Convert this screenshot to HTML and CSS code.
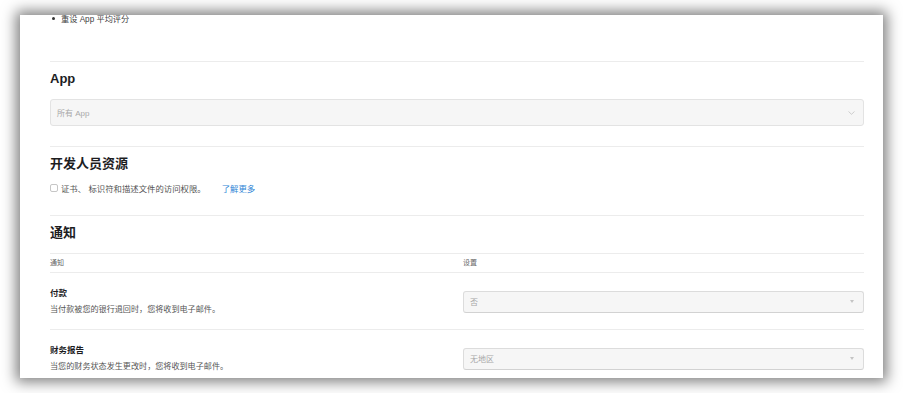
FILE: index.html
```html
<!DOCTYPE html>
<html lang="zh-CN">
<head>
  <meta charset="UTF-8" />
  <meta name="viewport" content="width=device-width, initial-scale=1.0"/>
  <title>用户访问权限</title>
  <link rel="stylesheet" href="styles.css">
</head>
<body>
  <div class="page">
    <div class="panel">
      <ul class="perm-list">
        <li>重设 App 平均评分</li>
      </ul>

      <div class="section">
        <h2>App</h2>
        <div class="select select-app">
          <span>所有 App</span>
          <svg class="chevron" width="7" height="4" viewBox="0 0 7 4"><path d="M0.5 0.5 L3.5 3.3 L6.5 0.5" fill="none" stroke="#c8c8c8" stroke-width="0.9"/></svg>
        </div>
      </div>

      <div class="section">
        <h2>开发人员资源</h2>
        <div class="check-row">
          <span class="checkbox"></span>
          <span class="check-text">证书、 标识符和描述文件的访问权限。</span>
          <a class="link" href="#">了解更多</a>
        </div>
      </div>

      <div class="section section-notify">
        <h2>通知</h2>
      </div>

      <div class="table-head">
        <span>通知</span>
        <span>设置</span>
      </div>

      <div class="row">
        <div class="row-info">
          <div class="row-title">付款</div>
          <div class="row-desc">当付款被您的银行退回时，您将收到电子邮件。</div>
        </div>
        <div class="select select-small">
          <span>否</span>
          <span class="caret"></span>
        </div>
      </div>

      <div class="row">
        <div class="row-info">
          <div class="row-title">财务报告</div>
          <div class="row-desc">当您的财务状态发生更改时，您将收到电子邮件。</div>
        </div>
        <div class="select select-small">
          <span>无地区</span>
          <span class="caret"></span>
        </div>
      </div>
    </div>
  </div>
</body>
</html>
```

FILE: styles.css
```css
body {
  margin: 0;
  background: #fff;
  font-family: "Liberation Sans", "Noto Sans CJK SC", sans-serif;
  color: #222;
}
.page {
  padding: 15px 20px;
}
.panel {
  width: 814px;
  height: 363px;
  padding: 0 19px 0 30px;
  background: #fff;
  overflow: hidden;
  box-shadow: 0 0 13px 4px rgba(0,0,0,0.5);
}
.perm-list {
  list-style: none;
  margin: -2px 0 35px 0;
  padding: 0;
  height: 13px;
  font-size: 8.2px;
  line-height: 13px;
  color: #444;
}
.perm-list li::before {
  content: "";
  display: inline-block;
  width: 3px;
  height: 3px;
  border-radius: 50%;
  background: #333;
  margin: 0 6px 0 2px;
  vertical-align: 2px;
}
.section {
  border-top: 1px solid #ececec;
  padding-top: 9px;
  padding-bottom: 20px;
}
.section h2 {
  margin: 0;
  font-size: 13px;
  line-height: 16px;
  font-weight: bold;
  color: #1d1d1f;
}
.section-notify {
  padding-bottom: 12px;
}
.select {
  display: flex;
  align-items: center;
  justify-content: space-between;
  box-sizing: border-box;
  background: #f6f6f6;
  border: 1px solid #e3e3e3;
  border-radius: 3px;
  padding: 0 8px 0 6px;
  font-size: 8px;
  color: #a8a8a8;
}
.select-app {
  margin-top: 12px;
  height: 27px;
}
.select-app .chevron {
  margin-top: 1px;
}
.select-small {
  height: 22px;
  width: 401px;
  border-color: #dcdcdc;
  border-bottom-color: #d2d2d2;
}
.caret {
  width: 0;
  height: 0;
  border-left: 2.5px solid transparent;
  border-right: 2.5px solid transparent;
  border-top: 3px solid #c4c4c4;
  margin-right: 1px;
}
.check-row {
  display: flex;
  align-items: center;
  margin-top: 9px;
  height: 14px;
  font-size: 8.4px;
  color: #555;
}
.checkbox {
  width: 6px;
  height: 6px;
  border: 1px solid #c6c6c6;
  border-radius: 2px;
  margin-right: 3px;
}
.link {
  margin-left: 16px;
  color: #2f86d6;
  text-decoration: none;
}
.table-head {
  display: grid;
  grid-template-columns: 413px 401px;
  border-top: 1px solid #ececec;
  padding: 4px 0 4px 0;
  font-size: 7px;
  line-height: 10px;
  color: #666;
}
.row {
  display: grid;
  grid-template-columns: 413px 401px;
  align-items: center;
  border-top: 1px solid #ececec;
  padding: 13px 0 12px 0;
}
.row-title {
  font-size: 8.5px;
  line-height: 14px;
  font-weight: bold;
  color: #1d1d1f;
}
.row-desc {
  margin-top: 3px;
  font-size: 8.1px;
  line-height: 14px;
  color: #555;
}
```
